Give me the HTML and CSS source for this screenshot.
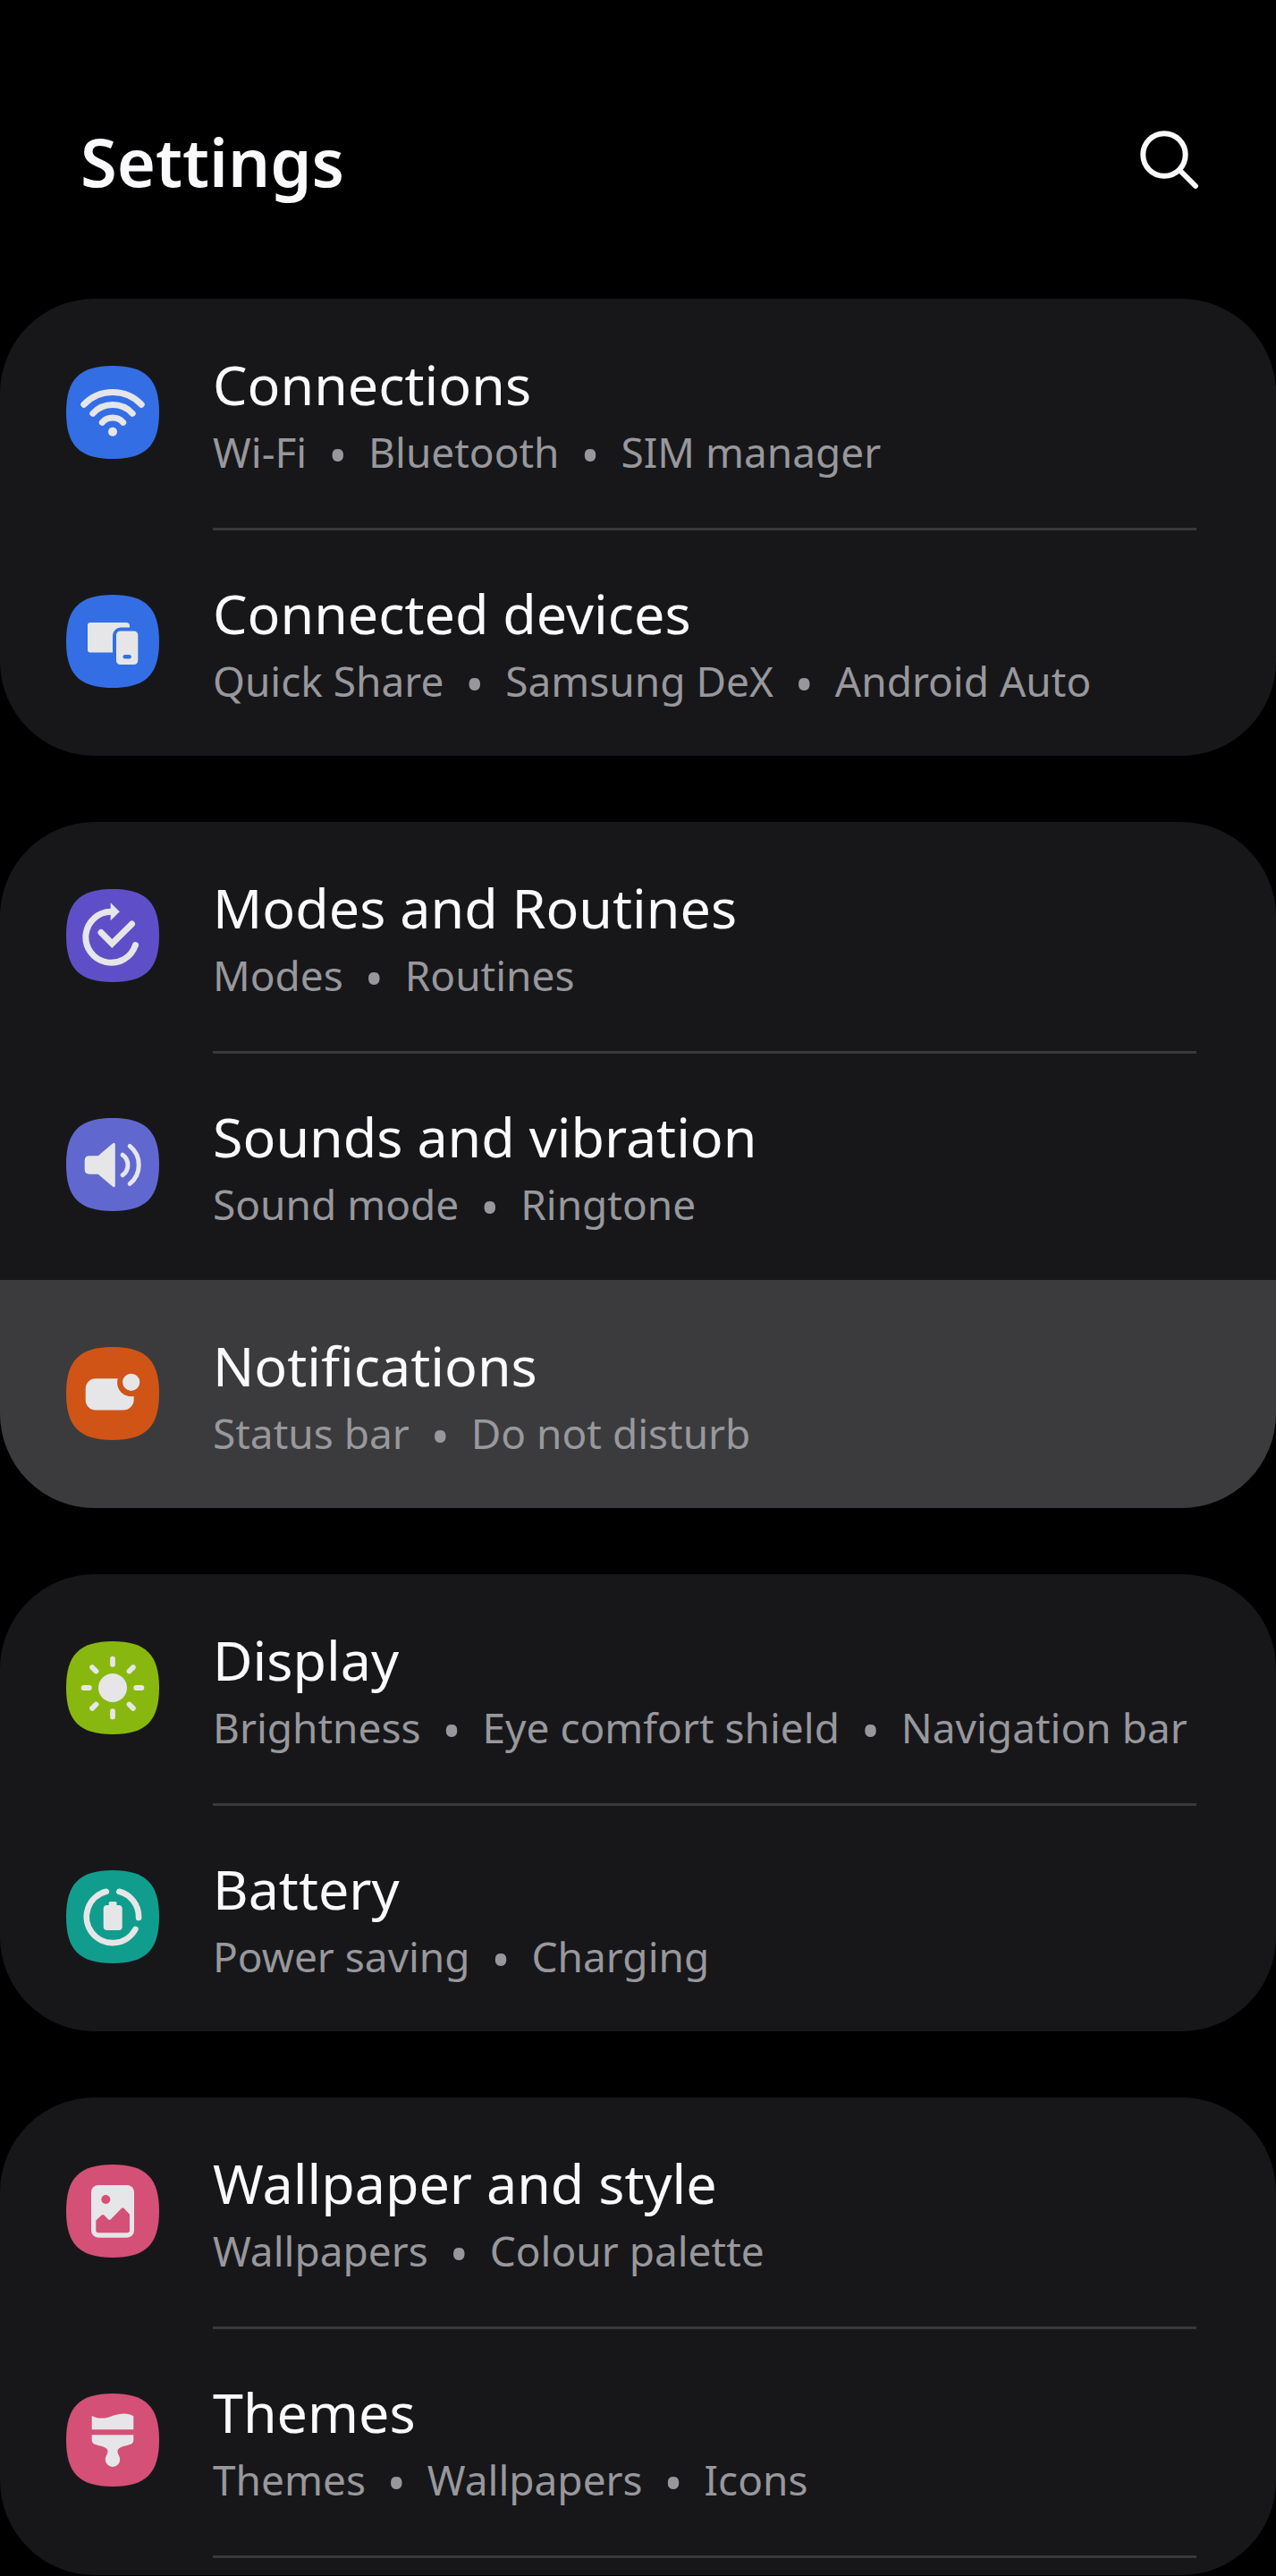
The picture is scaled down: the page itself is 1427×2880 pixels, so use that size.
FILE: index.html
```
<!DOCTYPE html>
<html lang="en">
<head>
    <meta charset="UTF-8">
    <meta name="viewport" content="width=device-width, initial-scale=1.0">
    <title>Settings</title>
    <link rel="stylesheet" href="styles.css">
</head>
<body>
<header class="header">
    <h1>Settings</h1>
    <button type="button" class="search-btn" aria-label="Search">
        <svg viewBox="0 0 66 66"><circle cx="27" cy="27" r="23.7"/><path d="M44.5 44.5L62 62"/></svg>
    </button>
</header>
<main>
    <section class="group">
        <a href="#connections" class="row">
            <svg class="icon blue" viewBox="0 0 104 104">
                <path class="tile" d="M52 0C15 0 0 15 0 52S15 104 52 104 104 89 104 52 89 0 52 0Z"/>
                <g class="line">
                    <path d="M19.8 43.3A44.7 44.7 0 0 1 84.2 43.3"/>
                    <path d="M29.8 53.3A30.3 30.3 0 0 1 74.2 53.3"/>
                    <path d="M40.3 63.3A15.8 15.8 0 0 1 63.7 63.3"/>
                </g>
                <circle cx="52" cy="73.7" r="5"/>
            </svg>
            <div class="text">
                <h2>Connections</h2>
                <p>Wi-Fi &nbsp;<span class="dot">•</span>&nbsp; Bluetooth &nbsp;<span class="dot">•</span>&nbsp; SIM manager</p>
            </div>
        </a>
        <a href="#devices" class="row">
            <svg class="icon blue" viewBox="0 0 104 104">
                <path class="tile" d="M52 0C15 0 0 15 0 52S15 104 52 104 104 89 104 52 89 0 52 0Z"/>
                <path d="M27 31H67A4 4 0 0 1 71 35V36.5H61A9 9 0 0 0 52 45.5V64.5H27A3 3 0 0 1 24 61.5V34A3 3 0 0 1 27 31Z"/>
                <rect x="56" y="40.5" width="24.3" height="37.5" rx="4.5"/>
                <rect class="tile" x="63.5" y="67" width="9.3" height="4.6" rx="2.3"/>
            </svg>
            <div class="text">
                <h2>Connected devices</h2>
                <p>Quick Share &nbsp;<span class="dot">•</span>&nbsp; Samsung DeX &nbsp;<span class="dot">•</span>&nbsp; Android Auto</p>
            </div>
        </a>
    </section>

    <section class="group">
        <a href="#modes" class="row">
            <svg class="icon purple" viewBox="0 0 104 104">
                <path class="tile" d="M52 0C15 0 0 15 0 52S15 104 52 104 104 89 104 52 89 0 52 0Z"/>
                <g class="line">
                    <path class="butt" d="M51 25.3A28.5 28.5 0 1 0 77.5 62.5"/>
                    <path d="M77.5 62.5L77.4 62.8"/>
                    <path class="sharp" d="M39 48.5L51.3 61 73.5 39"/>
                </g>
                <path d="M49.7 15.3L59.8 25.3 49.7 35.3Z"/>
            </svg>
            <div class="text">
                <h2>Modes and Routines</h2>
                <p>Modes &nbsp;<span class="dot">•</span>&nbsp; Routines</p>
            </div>
        </a>
        <a href="#sounds" class="row">
            <svg class="icon violet" viewBox="0 0 104 104">
                <path class="tile" d="M52 0C15 0 0 15 0 52S15 104 52 104 104 89 104 52 89 0 52 0Z"/>
                <path d="M26 42.3H35.7L52.2 28.2Q54.8 27 54.8 29.5V75.5Q54.8 78 52.2 76.8L35.7 62.7H26Q20.7 62.7 20.7 57.5V47.5Q20.7 42.3 26 42.3Z"/>
                <g class="line thin">
                    <path d="M63.2 41.2A14 14 0 0 1 63.2 63.8"/>
                    <path d="M71.2 31.4A27 27 0 0 1 71.2 73.4"/>
                </g>
            </svg>
            <div class="text">
                <h2>Sounds and vibration</h2>
                <p>Sound mode &nbsp;<span class="dot">•</span>&nbsp; Ringtone</p>
            </div>
        </a>
        <a href="#notifications" class="row active">
            <svg class="icon orange" viewBox="0 0 104 104">
                <path class="tile" d="M52 0C15 0 0 15 0 52S15 104 52 104 104 89 104 52 89 0 52 0Z"/>
                <path d="M33 35.3H57.7A15.5 15.5 0 0 0 75.7 55V58.5A11.8 11.8 0 0 1 63.9 70.5H33A11.3 11.3 0 0 1 21.7 59.2V46.6A11.3 11.3 0 0 1 33 35.3Z"/>
                <circle cx="72.7" cy="39.3" r="9.6"/>
            </svg>
            <div class="text">
                <h2>Notifications</h2>
                <p>Status bar &nbsp;<span class="dot">•</span>&nbsp; Do not disturb</p>
            </div>
        </a>
    </section>

    <section class="group">
        <a href="#display" class="row">
            <svg class="icon green" viewBox="0 0 104 104">
                <path class="tile" d="M52 0C15 0 0 15 0 52S15 104 52 104 104 89 104 52 89 0 52 0Z"/>
                <circle cx="52" cy="52" r="16"/>
                <path class="line rays" d="M52 19.6V25.8M52 78.2V84.4M19.6 52H25.8M78.2 52H84.4M29.1 29.1L33.5 33.5M70.5 70.5L74.9 74.9M74.9 29.1L70.5 33.5M33.5 70.5L29.1 74.9"/>
            </svg>
            <div class="text">
                <h2>Display</h2>
                <p>Brightness &nbsp;<span class="dot">•</span>&nbsp; Eye comfort shield &nbsp;<span class="dot">•</span>&nbsp; Navigation bar</p>
            </div>
        </a>
        <a href="#battery" class="row">
            <svg class="icon teal" viewBox="0 0 104 104">
                <path class="tile" d="M52 0C15 0 0 15 0 52S15 104 52 104 104 89 104 52 89 0 52 0Z"/>
                <g class="line ring">
                    <path d="M44.8 23.8A29.1 29.1 0 1 0 77.4 66"/>
                    <path d="M59.3 23.8A29.1 29.1 0 0 1 81.1 53"/>
                </g>
                <rect x="41.7" y="39" width="21" height="28" rx="4"/>
                <rect x="47.7" y="35" width="8.8" height="8" rx="1.5"/>
            </svg>
            <div class="text">
                <h2>Battery</h2>
                <p>Power saving &nbsp;<span class="dot">•</span>&nbsp; Charging</p>
            </div>
        </a>
    </section>

    <section class="group">
        <a href="#wallpaper" class="row">
            <svg class="icon pink" viewBox="0 0 104 104">
                <path class="tile" d="M52 0C15 0 0 15 0 52S15 104 52 104 104 89 104 52 89 0 52 0Z"/>
                <rect x="28" y="23" width="48" height="58.7" rx="8"/>
                <circle class="tile" cx="44.3" cy="39" r="5"/>
                <path class="tile" d="M33.3 62.5L39.6 56.6Q41 55.2 42.4 56.6L47 61.2Q48.4 62.6 49.8 61.2L61.9 48.9Q63.3 47.5 64.7 48.9L71 55.7V73.5Q71 76.3 68.2 76.3H36.1Q33.3 76.3 33.3 73.5Z"/>
            </svg>
            <div class="text">
                <h2>Wallpaper and style</h2>
                <p>Wallpapers &nbsp;<span class="dot">•</span>&nbsp; Colour palette</p>
            </div>
        </a>
        <a href="#themes" class="row">
            <svg class="icon pink" viewBox="0 0 104 104">
                <path class="tile" d="M52 0C15 0 0 15 0 52S15 104 52 104 104 89 104 52 89 0 52 0Z"/>
                <path d="M28.7 25C34 28 42 28.5 49 26C58 22.8 68 20.5 75.3 25.3V40.3H28.7Z"/>
                <path d="M28.7 46.3H75.3V52Q75.3 55.5 72 56.8C66 59 57.5 59.5 57.5 64.5C57.5 68 60.2 70 60.2 73.8A8.2 8.2 0 0 1 43.8 73.8C43.8 70 46.5 68 46.5 64.5C46.5 59.5 38 59 32 56.8Q28.7 55.5 28.7 52Z"/>
            </svg>
            <div class="text">
                <h2>Themes</h2>
                <p>Themes &nbsp;<span class="dot">•</span>&nbsp; Wallpapers &nbsp;<span class="dot">•</span>&nbsp; Icons</p>
            </div>
        </a>
        <div class="peek"></div>
    </section>
</main>
</body>
</html>
```

FILE: styles.css
```
* {
    box-sizing: border-box;
}
body {
    font-family: 'Noto Sans', 'Open Sans', sans-serif;
    background-color: #000;
    color: #fafafc;
    margin: 0;
}
h1, h2, p {
    margin: 0;
}
.header {
    display: flex;
    justify-content: space-between;
    align-items: flex-start;
    padding: 127px 86px 99px 90px;
}
h1 {
    font-size: 74px;
    font-weight: 600;
    line-height: 108px;
}
.search-btn {
    width: 66px;
    height: 66px;
    margin-top: 19px;
    padding: 0;
    border: none;
    background: none;
    cursor: pointer;
}
.search-btn svg {
    display: block;
    fill: none;
    stroke: #fafafc;
    stroke-width: 6;
    stroke-linecap: round;
}
.group {
    display: flex;
    flex-direction: column;
    gap: 1px;
    margin-bottom: 74px;
    background-color: #17171a;
    border-radius: 106px;
    overflow: hidden;
}
.group:last-child {
    margin-bottom: 0;
}
.row {
    display: flex;
    align-items: flex-start;
    height: 255px;
    padding: 0 89px 0 74px;
    color: inherit;
    text-decoration: none;
}
.row.active {
    background-color: #3b3b3d;
}
.text {
    flex: 1;
    margin-left: 60px;
    padding-top: 51px;
    border-top: 3px solid transparent;
}
.row + .row:not(.active) .text {
    border-top-color: #39393b;
}
h2 {
    font-size: 61px;
    font-weight: 400;
    line-height: 84px;
}
p {
    font-size: 46px;
    line-height: 66px;
    color: #98989c;
    white-space: nowrap;
}
.dot {
    font-size: 56px;
    line-height: 0;
    vertical-align: -7px;
}
/* top edge of the next row */
.peek {
    height: 22px;
    margin: 0 89px 0 238px;
    border-top: 3px solid #39393b;
}

/* icons */
.icon {
    flex: none;
    width: 104px;
    height: 104px;
    margin-top: 75px;
    fill: #e6e6e8;
}
.icon .line {
    fill: none;
    stroke: #e6e6e8;
    stroke-width: 7;
    stroke-linecap: round;
    stroke-linejoin: round;
}
.icon .butt {
    stroke-linecap: butt;
}
.icon .sharp {
    stroke-linejoin: miter;
}
.icon .thin {
    stroke-width: 5;
}
.icon .rays {
    stroke-width: 5.8;
}
.icon .ring {
    stroke-width: 6.6;
}
.blue .tile { fill: #346ee4; }
.purple .tile { fill: #5e4fc8; }
.violet .tile { fill: #6068d0; }
.orange .tile { fill: #d05416; }
.green .tile { fill: #88b80f; }
.teal .tile { fill: #119d8d; }
.pink .tile { fill: #d45076; }
```
